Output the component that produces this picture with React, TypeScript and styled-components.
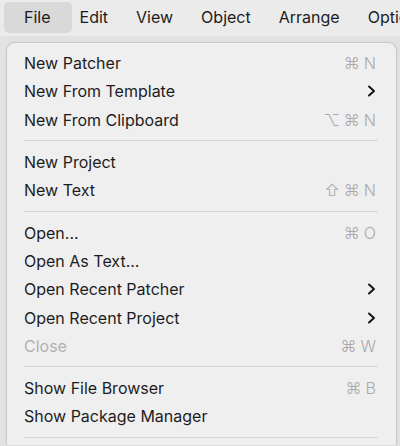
import styled, { createGlobalStyle } from "styled-components";

const GlobalStyle = createGlobalStyle`
  html, body {
    margin: 0;
    padding: 0;
    background: #e4e4e4;
    font-family: Inter, "Noto Sans", "DejaVu Sans", sans-serif;
    -webkit-font-smoothing: antialiased;
  }
`;

const Screen = styled.div`
  width: 400px;
  height: 446px;
  overflow: hidden;
  background: #e2e2e2;
`;

const MenuBar = styled.div`
  height: 36px;
  display: flex;
  align-items: center;
  padding: 0 0 0 4px;
  background: #ebebeb;
  white-space: nowrap;
  overflow: hidden;
`;

const BarItem = styled.div<{ $active?: boolean }>`
  height: 31px;
  margin-top: -2px;
  margin-right: ${(p) => (p.$active ? "-6px" : "0")};
  display: flex;
  align-items: center;
  padding: ${(p) => (p.$active ? "0 21px 0 20px" : "0 14px")};
  border-radius: 5px;
  font-size: 16px;
  color: #1c1c1c;
  background: ${(p) => (p.$active ? "#d9d9d9" : "transparent")};
`;

const Panel = styled.div`
  margin: 6px 0 0 6px;
  width: 389px;
  padding: 6px 0 0;
  background: #efeff0;
  border: 1px solid #c9c9c9;
  border-bottom: none;
  border-radius: 9px 9px 0 0;
  box-shadow: 0 0 2px rgba(0, 0, 0, 0.08);
`;

const Row = styled.div<{ $disabled?: boolean }>`
  height: 28.3px;
  display: flex;
  align-items: center;
  justify-content: space-between;
  padding: 0 20px 0 17px;
  font-size: 16px;
  color: ${(p) => (p.$disabled ? "#b1b1b1" : "#1d1d1d")};
`;

const Shortcut = styled.span`
  display: flex;
  gap: 4px;
  align-items: center;
  color: #a9a9a9;
  font-size: 16px;
  font-family: "DejaVu Sans", sans-serif;
  font-weight: 300;
`;

const Key = styled.span`
  font-family: Inter, "DejaVu Sans", sans-serif;
`;

const Separator = styled.div`
  height: 14px;
  display: flex;
  align-items: center;
  padding: 0 18px 0 17px;

  &::after {
    content: "";
    flex: 1;
    height: 1px;
    background: #d6d6d6;
  }
`;

const Chevron = () => (
  <svg width="9" height="12" viewBox="0 0 9 12">
    <polyline
      points="2,1.5 7,6 2,10.5"
      fill="none"
      stroke="#111"
      strokeWidth="1.9"
      strokeLinecap="round"
      strokeLinejoin="round"
    />
  </svg>
);

type Item =
  | { sep: true }
  | { label: string; keys?: string[]; sub?: boolean; disabled?: boolean };

const items: Item[] = [
  { label: "New Patcher", keys: ["⌘", "N"] },
  { label: "New From Template", sub: true },
  { label: "New From Clipboard", keys: ["⌥", "⌘", "N"] },
  { sep: true },
  { label: "New Project" },
  { label: "New Text", keys: ["⇧", "⌘", "N"] },
  { sep: true },
  { label: "Open...", keys: ["⌘", "O"] },
  { label: "Open As Text..." },
  { label: "Open Recent Patcher", sub: true },
  { label: "Open Recent Project", sub: true },
  { label: "Close", keys: ["⌘", "W"], disabled: true },
  { sep: true },
  { label: "Show File Browser", keys: ["⌘", "B"] },
  { label: "Show Package Manager" },
  { sep: true },
];

const menus = ["File", "Edit", "View", "Object", "Arrange", "Options"];

export default function App() {
  return (
    <Screen>
      <GlobalStyle />
      <MenuBar>
        {menus.map((m, i) => (
          <BarItem key={m} $active={i === 0}>
            {m}
          </BarItem>
        ))}
      </MenuBar>
      <Panel>
        {items.map((it, i) =>
          "sep" in it ? (
            <Separator key={i} />
          ) : (
            <Row key={i} $disabled={it.disabled}>
              <span>{it.label}</span>
              {it.sub && <Chevron />}
              {it.keys && (
                <Shortcut>
                  {it.keys.map((k, j) => (
                    <Key key={j}>{k}</Key>
                  ))}
                </Shortcut>
              )}
            </Row>
          )
        )}
      </Panel>
    </Screen>
  );
}
